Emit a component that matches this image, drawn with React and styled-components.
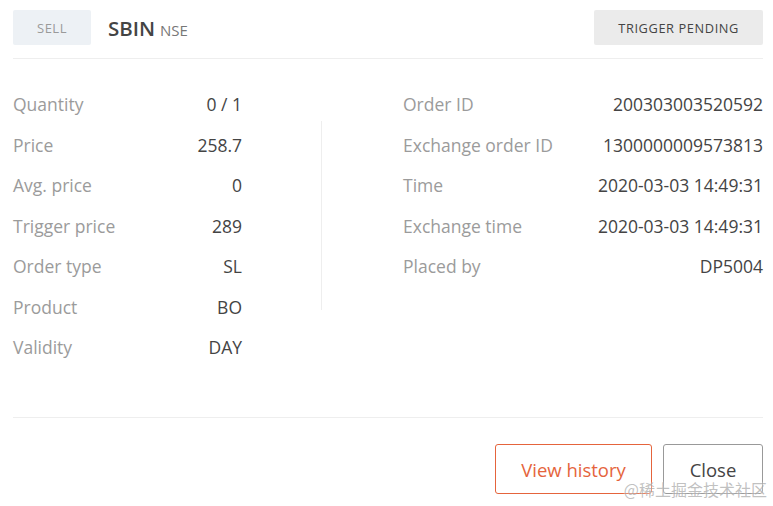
import React from "react";
import styled, { createGlobalStyle } from "styled-components";

const Global = createGlobalStyle`
  html, body { margin: 0; padding: 0; background: #fff; }
  body { font-family: "Open Sans", "Noto Sans", sans-serif; }
`;

const Page = styled.div`
  position: relative;
  width: 773px;
  height: 506px;
  box-sizing: border-box;
  padding: 0 10px 0 13px;
  overflow: hidden;
`;

const Header = styled.div`
  display: flex;
  align-items: center;
  padding: 10px 0 13px;
  border-bottom: 1px solid #eeeeee;
`;

const Badge = styled.span`
  display: inline-flex;
  align-items: center;
  justify-content: center;
  height: 35px;
  box-sizing: border-box;
  padding: 0 ${(p) => p.$pad}px;
  background: ${(p) => p.$bg};
  color: ${(p) => p.$color};
  font-size: ${(p) => p.$size}px;
  letter-spacing: ${(p) => p.$ls}px;
  border-radius: 2px;
  text-transform: uppercase;
`;

const Symbol = styled.div`
  margin-left: 17px;
  display: flex;
  align-items: baseline;
  gap: 5px;
  flex: 1;
`;

const Ticker = styled.span`
  font-size: 20.5px;
  font-weight: 600;
  color: #444;
`;

const Exchange = styled.span`
  font-size: 15px;
  color: #777;
`;

const Details = styled.div`
  display: flex;
  padding: 25px 0 49px;
  border-bottom: 1px solid #eeeeee;
`;

const Column = styled.div`
  width: ${(p) => p.$w}px;
  margin-left: ${(p) => p.$ml || 0}px;
  display: flex;
  flex-direction: column;
`;

const Row = styled.div`
  display: flex;
  justify-content: space-between;
  align-items: center;
  height: 40.5px;
  font-size: 17.5px;
`;

const Label = styled.span`
  color: #9b9b9b;
`;

const Value = styled.span`
  color: #444;
`;

const Separator = styled.div`
  width: 1px;
  height: 189px;
  margin: 37px 0 0 79px;
  background: #eeeeee;
  align-self: flex-start;
`;

const Footer = styled.div`
  display: flex;
  justify-content: flex-end;
  gap: 11px;
  padding-top: 26px;
`;

const Button = styled.button`
  height: 50px;
  width: ${(p) => p.$w}px;
  box-sizing: border-box;
  background: #fff;
  border: 1px solid ${(p) => p.$border};
  color: ${(p) => p.$color};
  border-radius: 3px;
  font-family: "Open Sans", "Noto Sans", sans-serif;
  font-size: 18.5px;
  padding: 0;
  padding-top: 2px;
  cursor: pointer;
`;

const Watermark = styled.div`
  position: absolute;
  right: 6px;
  bottom: 5px;
  font-family: "Noto Sans CJK SC", sans-serif;
  font-size: 16px;
  color: rgba(140, 140, 140, 0.55);
  text-shadow: 0 0 2px rgba(255, 255, 255, 0.9);
  pointer-events: none;
`;

const left = [
  ["Quantity", "0 / 1"],
  ["Price", "258.7"],
  ["Avg. price", "0"],
  ["Trigger price", "289"],
  ["Order type", "SL"],
  ["Product", "BO"],
  ["Validity", "DAY"],
];

const right = [
  ["Order ID", "200303003520592"],
  ["Exchange order ID", "1300000009573813"],
  ["Time", "2020-03-03 14:49:31"],
  ["Exchange time", "2020-03-03 14:49:31"],
  ["Placed by", "DP5004"],
];

export default function App() {
  return (
    <Page>
      <Global />
      <Header>
        <Badge $bg="#edf1f5" $color="#9a9a9a" $size={13} $ls={0.5} $pad={24}>
          Sell
        </Badge>
        <Symbol>
          <Ticker>SBIN</Ticker>
          <Exchange>NSE</Exchange>
        </Symbol>
        <Badge $bg="#ebebeb" $color="#444" $size={12.8} $ls={0.6} $pad={24}>
          Trigger pending
        </Badge>
      </Header>
      <Details>
        <Column $w={229}>
          {left.map(([l, v]) => (
            <Row key={l}>
              <Label>{l}</Label>
              <Value>{v}</Value>
            </Row>
          ))}
        </Column>
        <Separator />
        <Column $w={360} $ml={81}>
          {right.map(([l, v]) => (
            <Row key={l}>
              <Label>{l}</Label>
              <Value>{v}</Value>
            </Row>
          ))}
        </Column>
      </Details>
      <Footer>
        <Button $w={157} $border="#e5643c" $color="#e5643c">
          View history
        </Button>
        <Button $w={100} $border="#999" $color="#444">
          Close
        </Button>
      </Footer>
      <Watermark>@稀土掘金技术社区</Watermark>
    </Page>
  );
}
